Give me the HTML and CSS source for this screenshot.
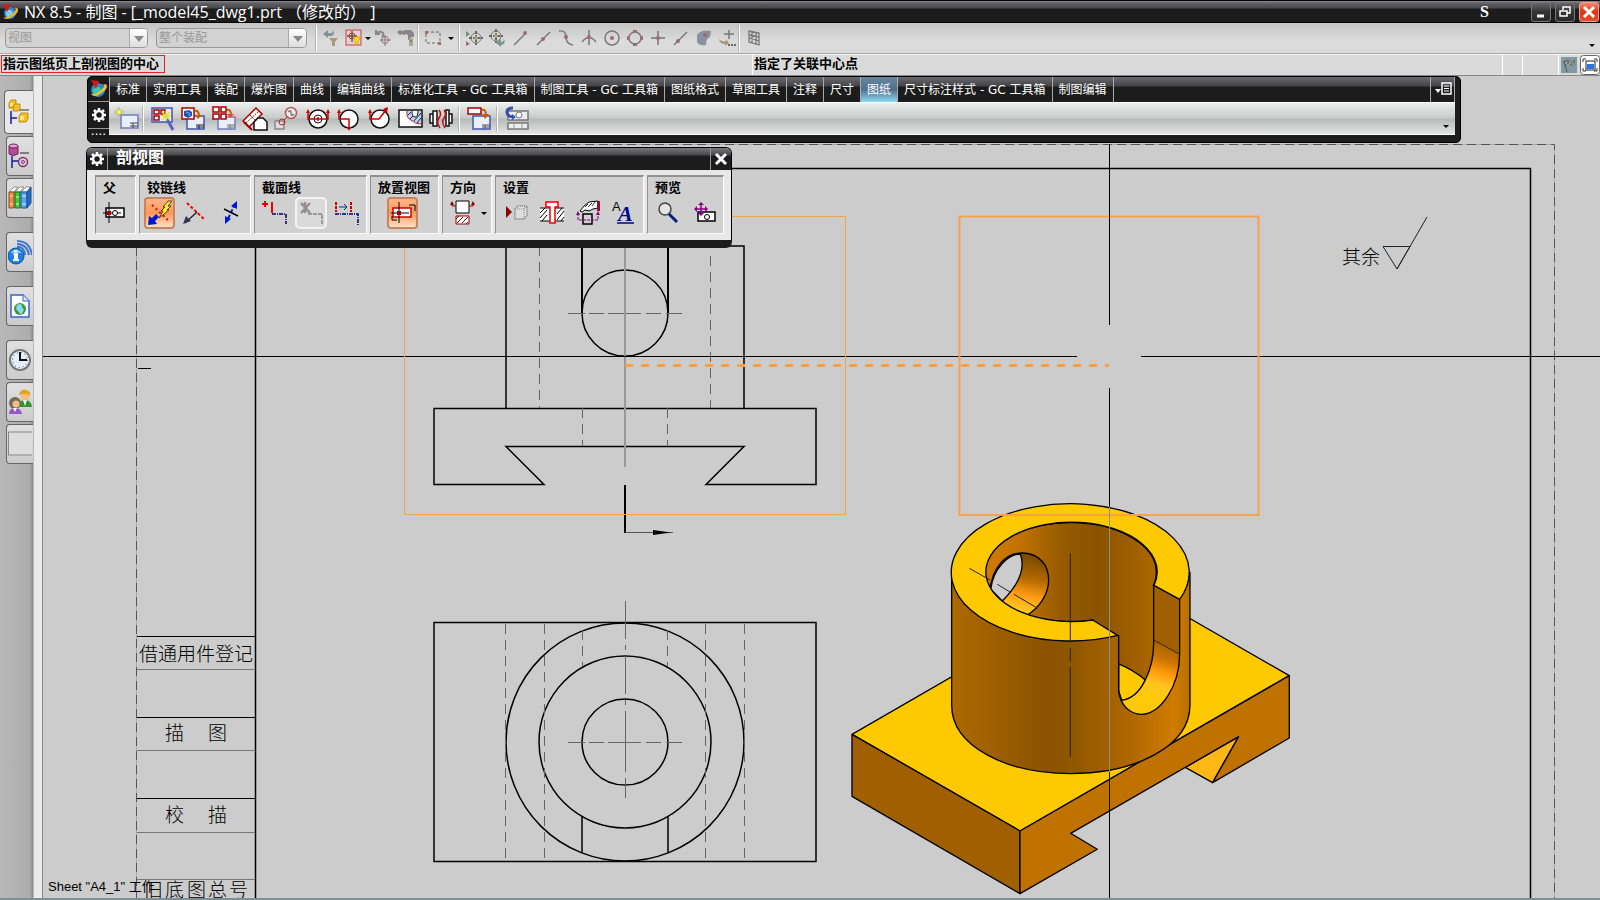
FILE: index.html
```html
<!DOCTYPE html>
<html lang="zh-CN">
<head>
  <meta charset="UTF-8">
  <meta name="viewport" content="width=device-width, initial-scale=1.0">
  <title>NX 8.5 - 制图</title>
  <link rel="stylesheet" href="styles.css">
</head>
<body>

  <header class="titlebar">
    <svg class="logo" width="18" height="18" viewBox="0 0 18 18">
      <circle cx="8" cy="10" r="6" fill="#2a86d0"/>
      <path d="M4 8q3-3 7 1l-3 6q-5-1-4-7z" fill="#7fd0f0"/>
      <path d="M1 14q2 4 9 0 7-4 6-8-1-2-4-1 3 1 1 3-3 4-8 6-3 1-4 0z" fill="#f4b030"/>
      <path d="M1 1l8 1-4 7z" fill="#d01818"/>
    </svg>
    <h1>NX 8.5 - 制图 - [_model45_dwg1.prt （修改的） ]</h1>
    <span class="ime">S</span>
    <div class="window-buttons">
      <button aria-label="最小化"><svg width="18" height="18"><path d="M5 13h7" stroke="#fff" stroke-width="3"/></svg></button>
      <button aria-label="还原"><svg width="18" height="18" fill="none" stroke="#fff" stroke-width="1.5"><path d="M7 7V4h7v6h-3"/><path d="M4 8h7v5H4z"/></svg></button>
      <button class="close" aria-label="关闭"><svg width="18" height="18"><path d="M4 4l10 10M14 4L4 14" stroke="#fff" stroke-width="3"/></svg></button>
    </div>
  </header>

  <div class="selection-bar">
    <div class="combo combo-type"><select aria-label="类型过滤器" disabled><option>视图</option></select></div>
    <div class="combo combo-scope"><select aria-label="选择范围" disabled><option>整个装配</option></select></div>
    <span class="sep"></span>
    <button aria-label="重置过滤器"><svg viewBox="0 0 18 18"><path d="M1 5l5-4v3h4q1-2 0-3 4 3 0 6H6v2z" fill="#7d9494"/><path d="M7 9h9l-3 4v4h-3v-4z" fill="#aa9a78"/></svg></button>
    <button aria-label="允许选择"><svg viewBox="0 0 18 18"><rect x="1" y="1" width="15" height="15" fill="#e4d0cc" stroke="#c8404c"/><path d="M7 2v11M2 7h10" stroke="#222"/><circle cx="7" cy="7" r="3" fill="none" stroke="#c03030"/><path d="M8 8h8l-3 4v4l-3-2v-2z" fill="#ffd61a" stroke="#c69000" stroke-width=".6"/></svg></button>
    <span class="drop drop-near"></span>
    <button aria-label="撤销选择"><svg viewBox="0 0 18 18" fill="none"><path d="M2 5q4-4 7-1 1 2-1 4M2 1v4h4" stroke="#85858a" stroke-width="2"/><circle cx="11" cy="11" r="3.500" stroke="#a06c6c"/><path d="M11 6v11M6 11h11" stroke="#8a7474"/></svg></button>
    <button aria-label="工具"><svg viewBox="0 0 18 18"><path d="M0 3l3-2 3 1 2-1h6l3 3v4h-3v3h-3V6L9 5 7 6 5 5 3 6z" fill="#85858a"/><path d="M12 9h4v8h-4z" fill="#b0a890"/><path d="M13 11h2v2h-2z" fill="#808084"/></svg></button>
    <span class="sep"></span>
    <button aria-label="矩形选择"><svg viewBox="0 0 18 18"><rect x="2" y="3" width="14" height="11" fill="none" stroke="#666" stroke-dasharray="3 2"/><path d="M1 2h3v3H1zM14 13h3v3h-3z" fill="#a06c6c"/></svg></button>
    <span class="drop drop-wide"></span>
    <span class="sep"></span>
    <button aria-label="移动"><svg viewBox="0 0 18 18"><path d="M1 2l4 3-4 3z" fill="#769078"/><path d="M1 12l4 3-4 2z" fill="#a06c6c"/><circle cx="11" cy="9" r="5" fill="none" stroke="#777"/><path d="M11 2v14M4 9h14" stroke="#666" stroke-width="2" stroke-dasharray="3 1"/><circle cx="11" cy="9" r="2" fill="#b3a37c"/></svg></button>
    <button aria-label="定向"><svg viewBox="0 0 18 18"><circle cx="8" cy="7" r="5" fill="none" stroke="#777"/><path d="M8 0v14M1 7h14" stroke="#666" stroke-width="2" stroke-dasharray="3 1"/><circle cx="8" cy="7" r="2" fill="#b3a37c"/><path d="M8 14l5-4v3q4 0 2-4 4 5-1 7h-1v2z" fill="#7d9494"/></svg></button>
    <button aria-label="端点"><svg viewBox="0 0 18 18"><path d="M3 16L14 5" stroke="#777" stroke-width="1.500"/><circle cx="14" cy="4" r="2" fill="#a06c6c"/></svg></button>
    <button aria-label="中点"><svg viewBox="0 0 18 18"><path d="M3 16L16 3" stroke="#777" stroke-width="1.500"/><circle cx="9" cy="10" r="2" fill="#a06c6c"/></svg></button>
    <button aria-label="控制点"><svg viewBox="0 0 18 18"><path d="M2 2q7-1 7 6t7 8" fill="none" stroke="#777" stroke-width="1.500"/><circle cx="9" cy="8" r="2" fill="#a06c6c"/></svg></button>
    <button aria-label="交点"><svg viewBox="0 0 18 18"><path d="M9 1v15M2 13q7-9 14 0" fill="none" stroke="#777" stroke-width="1.500"/><circle cx="9" cy="8" r="2" fill="#a06c6c"/></svg></button>
    <button aria-label="圆心"><svg viewBox="0 0 18 18"><circle cx="9" cy="9" r="7" fill="none" stroke="#777" stroke-width="1.500"/><circle cx="9" cy="9" r="2" fill="#a06c6c"/></svg></button>
    <button aria-label="象限点"><svg viewBox="0 0 18 18"><circle cx="9" cy="9" r="6" fill="none" stroke="#777" stroke-width="1.500"/><path d="M7 1h4v3H7zM7 14h4v3H7zM1 7h3v4H1zM14 7h3v4h-3z" fill="#a06c6c"/></svg></button>
    <button aria-label="现有点"><svg viewBox="0 0 18 18"><path d="M9 2v14M2 9h14" stroke="#777" stroke-width="1.500"/><circle cx="9" cy="9" r="2" fill="#a06c6c"/></svg></button>
    <button aria-label="曲线上的点"><svg viewBox="0 0 18 18"><path d="M2 16L15 3" stroke="#777" stroke-width="1.500"/><circle cx="6" cy="12" r="2" fill="#a06c6c"/></svg></button>
    <button aria-label="面上的点"><svg viewBox="0 0 18 18"><path d="M2 6q4-6 14-4l-1 6q-4 1-4 8-7 1-9-3z" fill="#8791a0"/><circle cx="10" cy="6" r="2" fill="#a06c6c"/></svg></button>
    <button aria-label="点构造器"><svg viewBox="0 0 18 18"><path d="M11 1v9M6 5h10" stroke="#777" stroke-width="1.500"/><path d="M1 9q1 4 7 3v-2l3 4-4 3v-2q-6 0-6-6z" fill="#a99878"/><path d="M10 16h2M13 16h2M16 16h2" stroke="#666" stroke-width="2"/></svg></button>
    <span class="sep"></span>
    <button aria-label="栅格"><svg viewBox="0 0 18 18"><path d="M4 2l10 2v12L4 13zM7 3v11M11 3v12M4 6l10 2M4 9l10 3" fill="none" stroke="#777" stroke-width="1.300"/></svg></button>
    <span class="drop overflow"></span>
  </div>

  <div class="prompt-bar">
    <div class="cue"><span>指示图纸页上剖视图的中心</span></div>
    <div class="status">指定了关联中心点</div>
    <div class="cell cell-small"></div>
    <div class="cell"></div>
    <div class="cell-icons">
      <svg width="16" height="16" viewBox="0 0 16 16"><path d="M0 0h16v16H0z" fill="#7d9aa5"/><path d="M2 4q5-3 7 0t5-2v6q-3 2-5 0t-5 1z" fill="#77726c"/><path d="M3 4l3 11" stroke="#555"/><path d="M4 5h2v2H4zM8 5h2v2H8zM6 7h2v2H6zM11 6h2v2h-2z" fill="#a0a098"/></svg>
      <svg width="20" height="20" viewBox="0 0 20 20"><rect x=".5" y=".5" width="19" height="19" rx="3" fill="#fff" stroke="#666"/><path d="M3 7V4h3M14 4h3v3M3 13v3h3M14 16h3v-3" fill="none" stroke="#333"/><rect x="6" y="6" width="9" height="9" fill="#fff" stroke="#222"/><path d="M7 9h7v5H7z" fill="#2679e0"/></svg>
    </div>
  </div>

  <main>
    <nav class="resource-bar">
      <button class="active" aria-label="装配导航器"><svg width="22" height="28" viewBox="0 0 22 28"><path d="M3 13v13M3 20h6" stroke="#1818a0" stroke-width="1.500"/><path d="M11 12h10" stroke="#333"/><g fill="#f7c02a" stroke="#b87800" stroke-width=".8"><path d="M1 5l2-3h5v6l-2 2H1z"/><path d="M5 9l2-3h5v6l-2 1H5z"/><path d="M11 18l2-3h7v6l-2 3h-7z"/></g><path d="M2 5h3v3H2zM12 18h4v4h-4z" fill="#ffe88a"/></svg></button>
      <button aria-label="约束导航器"><svg width="22" height="28" viewBox="0 0 22 28"><path d="M4 14v12M4 19h6" stroke="#1818a0" stroke-width="1.500"/><path d="M12 11h9" stroke="#222"/><path d="M1 4v8q4 3 9 0V4z" fill="#b44aa0" stroke="#70205e"/><ellipse cx="5.500" cy="4" rx="4.500" ry="2" fill="#e4a0d8" stroke="#70205e"/><circle cx="15" cy="20" r="4.500" fill="none" stroke="#8a2c74" stroke-width="1.500"/><circle cx="15" cy="20" r="1.500" fill="none" stroke="#8a2c74"/></svg></button>
      <button aria-label="重用库"><svg width="24" height="26" viewBox="0 0 24 26"><path d="M1 7l5-5h4L6 7zM7 7l5-5h4l-4 5zM13 7l5-5h5l-4 5z" fill="#fff" stroke="#777" stroke-width=".8"/><path d="M1 7h5v16H1z" fill="#f08a3c" stroke="#8c4a20"/><path d="M7 7h5v16H7z" fill="#3ccc38" stroke="#186a18"/><path d="M13 7h6v16h-6z" fill="#58a8f0" stroke="#1c4c90"/><path d="M19 7l4-5v16l-4 5z" fill="#1e6cc8" stroke="#1c4c90"/><path d="M2 11h3M8 12h3M14 11h4M2 19h3M8 19h3M14 19h4" stroke="#e8f4d8"/></svg></button>
      <button class="spaced" aria-label="HD3D 工具"><svg width="24" height="26" viewBox="0 0 24 26"><path d="M9 8q7-1 8 8M9 5q10 0 12 11M9 2q13 0 15 14" fill="none" stroke="#3c74d0" stroke-width="2"/><circle cx="8" cy="17" r="8" fill="#1b80e8" stroke="#1455a8"/><path d="M2 14q6-7 12 0" fill="#8cc6ff"/><path d="M6 14h4v6h1v2H5v-2h1v-4H5zM6 11h3v2H6z" fill="#fff"/></svg></button>
      <button class="spaced" aria-label="Web 浏览器"><svg width="22" height="26" viewBox="0 0 22 26"><path d="M3 2h12l6 6v16H3z" fill="#fff" stroke="#3266c8" stroke-width="1.500"/><path d="M15 2v6h6" fill="#d8e4ff" stroke="#3266c8"/><circle cx="12" cy="16" r="6" fill="#3d9a38"/><path d="M9 12q5-3 5 2l2 3-3 5-3-4-2-2z" fill="#8ed4f4"/></svg></button>
      <button class="spaced" aria-label="历史记录"><svg width="24" height="24" viewBox="0 0 24 24"><circle cx="12" cy="12" r="10" fill="#e4eefc" stroke="#777" stroke-width="2"/><circle cx="12" cy="12" r="7.500" fill="none" stroke="#445" stroke-dasharray="1 3"/><path d="M12 4v8h7" fill="none" stroke="#111" stroke-width="2"/></svg></button>
      <button aria-label="角色"><svg width="24" height="26" viewBox="0 0 24 26"><path d="M10 17q1-6 7-6t7 7H12z" fill="#2f9630"/><path d="M15 11h4l-2 6z" fill="#fff"/><circle cx="17" cy="7" r="4.500" fill="#f2bd80"/><path d="M11 6q1-6 7-5 5 1 4 6-3-3-7-2z" fill="#dfa51c"/><circle cx="7" cy="14" r="6" fill="#75695a"/><circle cx="8" cy="15" r="3.500" fill="#f2bd80"/><path d="M1 25q0-6 6-6t7 6z" fill="#9955cc"/><path d="M5 19h4l-2 4z" fill="#fff"/></svg></button>
      <button aria-label="空白"><svg width="24" height="26"><rect x=".5" y="1" width="26" height="23" fill="#ddd" stroke="#888"/></svg></button>
    </nav>

    <section class="canvas">
      <svg class="drawing" viewBox="43 76 1557 822" preserveAspectRatio="xMinYMin slice">
        <defs>
          <linearGradient id="outer"><stop offset="0" stop-color="#ae6900"/><stop offset=".4" stop-color="#8a5300"/><stop offset=".5" stop-color="#8f5600"/><stop offset=".75" stop-color="#ae6800"/><stop offset=".93" stop-color="#d07b00"/><stop offset="1" stop-color="#b87000"/></linearGradient>
          <linearGradient id="inner" gradientUnits="userSpaceOnUse" x1="435" y1="0" x2="949" y2="0"><stop offset="0" stop-color="#cf7b00"/><stop offset=".2" stop-color="#c27200"/><stop offset=".45" stop-color="#965a00"/><stop offset=".65" stop-color="#8a5300"/><stop offset="1" stop-color="#ad6700"/></linearGradient>
          <linearGradient id="hole" x1=".4" y1="0" x2=".2" y2="1"><stop offset="0" stop-color="#7c4a00"/><stop offset=".35" stop-color="#b46a00"/><stop offset=".62" stop-color="#ff9c14"/><stop offset=".85" stop-color="#ffc81e"/></linearGradient>
          <linearGradient id="slot" gradientUnits="userSpaceOnUse" x1="985" y1="500" x2="940" y2="650"><stop offset="0" stop-color="#ad6600"/><stop offset=".25" stop-color="#c87300"/><stop offset=".5" stop-color="#ff970c"/><stop offset=".75" stop-color="#ffc51e"/><stop offset="1" stop-color="#ffc90a"/></linearGradient>
        </defs>

        <!-- sheet border and title column -->
        <path d="M136.500 900V144.500H1554.500V900" fill="none" stroke="#aaa"/>
        <path d="M136.500 900V144.500H1554.500V900" fill="none" stroke="#555" stroke-dasharray="9 5"/>
        <path d="M255.500 900V168.500H1530.500V900" fill="none" stroke="#000" stroke-width="1.500"/>
        <path d="M137 636.500H255M137 717.500H255M137 798.500H255M138 368.500H151" stroke="#000"/>
        <path d="M137 669.500H255M137 750.500H255M137 832.500H255M137 879.500H255" stroke="#777"/>
        <g class="cad-text">
          <text x="139" y="661">借通用件登记</text>
          <text x="165" y="740">描</text><text x="208" y="740">图</text>
          <text x="165" y="822">校</text><text x="208" y="822">描</text>
          <text x="144 165 187 208 229" y="897">旧底图总号</text>
          <text x="1342" y="264">其余</text>
        </g>
        <path d="M1383 246.500H1410L1397 269L1383 246.500M1397 269L1427 217" fill="none" stroke="#222"/>
        <text class="sheet-name" x="48" y="891">Sheet "A4_1" 工作</text>

        <!-- front view -->
        <g fill="none" stroke="#000" stroke-width="1.500">
          <path d="M506 408.500V246H744V408.500M434 408.500H816V484.500H706L744 446.500H506L544 484.500H434z"/>
          <path d="M582 246V313M668 246V313" stroke-width="2"/>
          <circle cx="625" cy="313" r="43"/>
        </g>
        <g stroke="#666" stroke-dasharray="10 6" fill="none">
          <path d="M539.500 246V408M710.500 256V408M582.500 408V446M667.500 408V446"/>
        </g>
        <path d="M568 313.500H585M589 313.500H604M608 313.500H641M646 313.500H661M666 313.500H682" stroke="#666"/>
        <path d="M625 246V467" stroke="#999" stroke-width="2"/>
        <path d="M625 485V533" stroke="#000" stroke-width="2"/>
        <path d="M625 532.500H673" stroke="#555"/>
        <path d="M653 530L671 532.500L653 535z"/>

        <!-- top view -->
        <g fill="none" stroke="#000" stroke-width="1.500">
          <path d="M434 622.500H816V861.500H434z"/>
          <circle cx="625" cy="742" r="119"/>
          <circle cx="625" cy="742" r="86"/>
          <circle cx="625" cy="742" r="43"/>
          <path d="M582 816V853M668 816V853"/>
        </g>
        <path d="M505.500 624V861M544.500 624V861M705.500 624V861M744.500 624V861M582.500 630V666M667.500 630V666" stroke="#666" stroke-dasharray="10 6"/>
        <path d="M568 742.500H585M589 742.500H604M608 742.500H641M646 742.500H661M666 742.500H682M625.500 601V639M625.500 645V650M625.500 656V694M625.500 700V705M625.500 711V772M625.500 778V798" stroke="#666"/>

        <path d="M43 356.500H1077M1141 356.500H1600" stroke="#000"/>

        <!-- isometric view -->
        <g class="solid" transform="translate(840 480) scale(.3333)" fill="none" stroke="#000" stroke-width="4" stroke-linejoin="round">
          <path fill="#ffc900" d="M36 763L844 297L1348 587L540 1053z"/>
          <path fill="#a05f00" d="M36 763L540 1053V1241L36 949z"/>
          <path fill="#ffb617" d="M1036 862L1196 770L1118 908z"/>
          <path fill="#bf7200" d="M540 1053L1348 587V774L1118 908L1196 770L692 1060L772 1108L540 1241z"/>
          <path fill="url(#outer)" d="M335 277V675C335 800 500 881 692 881S1050 800 1050 675V277z"/>
          <ellipse fill="url(#inner)" cx="692" cy="277" rx="257" ry="149"/>
          <path fill="url(#hole)" d="M450 335C455 260 500 219 545 219C600 219 626 258 626 300C626 345 595 385 562 405L500 400z"/>
          <path fill="#ccc" d="M452 328C460 265 505 222 541 222C557 265 540 310 487 363z"/>
          <path fill="url(#inner)" stroke="none" d="M758 420L836 466V552Q880 570 916 600Q941 550 941 490V316L880 350z"/>
          <path fill="#ffc900" d="M836 552Q880 570 916 600Q890 655 845 661L836 632z"/>
          <path fill="#a05f00" d="M941 316L1019 358V523L941 480z" stroke="none"/>
          <path fill="url(#slot)" d="M941 480L1019 523C1019 620 960 703 905 703Q865 703 845 661Q890 655 916 600Q941 550 941 480z" stroke="none"/>
          <path d="M836 466V632C840 675 870 703 905 703C960 703 1019 620 1019 523V358M941 316V490Q941 550 916 600Q890 655 845 661"/>
          <path d="M941 480L1019 523" stroke-width="2"/>
          <path fill="#ffc900" d="M1019 358A357 206 0 1 0 833 466L758 420A257 149 0 1 1 942 316z"/>
          <path stroke-width="3" stroke="#222" d="M691 220V488M691 505V545M691 560V830M388 265L450 300M472 313L510 336M522 343L593 385"/>
        </g>

        <!-- view bounds, hinge line and crosshair -->
        <g fill="none" stroke="#f9a14a">
          <path d="M404.500 216.500H845.500V514.500H404.500z"/>
          <path d="M959.500 216.500H1258.500V515H959.500z" stroke-width="2"/>
          <path d="M625 365.500H1109" stroke-width="3" stroke-dasharray="8 8"/>
        </g>
        <path d="M1109.500 144V325M1109.500 388V898" stroke="#000"/>
        <path d="M1109.500 507V772" stroke="#8a8f90"/>
      </svg>

      <div class="toolbar">
        <div class="grip">
          <svg width="20" height="24" viewBox="0 0 20 24"><circle cx="9" cy="13" r="7" fill="#2a86d0"/><path d="M4 12q4-5 8 0l-3 7q-6-1-5-7z" fill="#40c8a0"/><path d="M2 17q3 4 9 0 7-4 7-8 0-3-5-1 3 0 2 2-3 4-9 7z" fill="#f4c030"/><path d="M2 3l8 1-3 8z" fill="#d01818"/></svg>
          <button aria-label="工具条选项"><svg class="gear" width="16" height="16" viewBox="0 0 16 16"><circle cx="8" cy="8" r="4" fill="none" stroke="#fff" stroke-width="2.500"/><path d="M8 1v2M8 13v2M1 8h2M13 8h2M3 3l1.500 1.500M11.500 11.500L13 13M13 3l-1.500 1.500M4.500 11.500L3 13" stroke="#fff" stroke-width="2.500"/></svg></button>
          <span class="dots">····</span>
        </div>
        <div class="toolbar-body">
          <div class="tabs">
            <button>标准</button><button>实用工具</button><button>装配</button><button>爆炸图</button><button>曲线</button><button>编辑曲线</button><button>标准化工具 - GC 工具箱</button><button>制图工具 - GC 工具箱</button><button>图纸格式</button><button>草图工具</button><button>注释</button><button>尺寸</button><button class="selected">图纸</button><button>尺寸标注样式 - GC 工具箱</button><button>制图编辑</button>
            <button class="tab-menu" aria-label="工具条列表"><svg width="18" height="14" viewBox="0 0 18 14"><path d="M1 7h6l-3 4z" fill="#fff"/><path d="M8 1h9v11H8z" fill="none" stroke="#fff" stroke-width="1.500"/><path d="M10 4h5M10 6.500h5M10 9h5" stroke="#fff"/></svg></button>
          </div>
          <div class="tools">
            <button aria-label="新建图纸页"><svg viewBox="0 0 26 26"><path d="M7 9h17v13H7z" fill="#e8eefa" stroke="#6d7fc4" stroke-width="1.500"/><path d="M16 17h8M19 17v5M16 20h8" stroke="#444"/><path d="M5 1v10M0 6h10M2 3l6 6M8 3L2 9" stroke="#a5b04a"/><circle cx="5" cy="6" r="2" fill="#ff4"/></svg></button>
            <span class="sep"></span>
            <button aria-label="视图创建向导"><svg viewBox="0 0 26 26"><path d="M3 2h20v14H3z" fill="#e8eefa" stroke="#4257ae" stroke-width="1.500"/><path d="M5 4h5v4H5zM12 4h4v4h-4zM5 10h5v4H5z" fill="#fff" stroke="#a00" stroke-width="1.500"/><path d="M18 13l6 11" stroke="#5566c8" stroke-width="3"/><path d="M17 5v10M12 10h10M13 6l8 8M21 6l-8 8" stroke="#e2df3c" stroke-width="1.500"/></svg></button>
            <button aria-label="基本视图"><svg viewBox="0 0 26 26"><path d="M7 10h17v13H7z" fill="#e8eefa" stroke="#4257ae" stroke-width="1.500"/><path d="M16 19h8M19 19v4M16 21h8" stroke="#222"/><path d="M2 2h12v11H2z" fill="#fff" stroke="#a00" stroke-width="1.500"/><path d="M4 5l5-1 3 2v4l-4 2-4-2z" fill="#2455b4"/><path d="M6 6l3 1 1 3" stroke="#7ab0ee" fill="none"/><path d="M15 5q4-1 4 5" stroke="#c55c08" stroke-width="2" fill="none"/><path d="M15 9h7l-4 4z" fill="#c55c08"/></svg></button>
            <button aria-label="标准视图"><svg viewBox="0 0 26 26"><path d="M7 11h17v12H7z" fill="#e8eefa" stroke="#6d7fc4" stroke-width="1.500"/><path d="M16 19h8M19 19v4M16 21h8" stroke="#777"/><path d="M2 1h6v5H2zM10 1h5v5h-5zM2 8h6v5H2zM10 8h5v5h-5z" fill="#fff" stroke="#a00" stroke-width="1.500"/><path d="M16 4q4-1 4 5" stroke="#c55c08" stroke-width="2" fill="none"/><path d="M16 8h7l-4 4z" fill="#c55c08"/></svg></button>
            <button aria-label="投影视图"><svg viewBox="0 0 26 26"><path d="M1 15L14 2l6 6L7 21z" fill="#fff" stroke="#a00" stroke-width="1.500"/><path d="M4 17L17 5M8 9l5 5" stroke="#a00" stroke-dasharray="2 1"/><path d="M2 16l8 8" stroke="#a00" stroke-width="2"/><path d="M12 16l4-4h5l4 4v8H12z" fill="#fff" stroke="#111" stroke-width="1.500"/></svg></button>
            <button aria-label="局部放大图"><svg viewBox="0 0 26 26"><path d="M2 15h9v8H2z" fill="#ddd" stroke="#888" stroke-width="1.500"/><circle cx="9" cy="16" r="3" fill="none" stroke="#b22"/><path d="M11 14l4-4" stroke="#b22"/><circle cx="18" cy="7" r="5.500" fill="#eee" stroke="#b55" stroke-width="1.500"/><path d="M15 6q3-3 3 1t3 1" fill="none" stroke="#777" stroke-width="1.500"/></svg></button>
            <button aria-label="剖视图"><svg viewBox="0 0 26 26"><circle cx="14" cy="13" r="9" fill="#fff" stroke="#111" stroke-width="1.500"/><circle cx="14" cy="13" r="4" fill="none" stroke="#111"/><path d="M4 6v7h20V6M14 11v4" fill="none" stroke="#c00" stroke-width="1.500"/><path d="M4 3l2 4H2zM24 3l2 4h-4z" fill="#c00"/></svg></button>
            <button aria-label="半剖视图"><svg viewBox="0 0 26 26"><circle cx="14" cy="13" r="9" fill="#fff" stroke="#111" stroke-width="1.500"/><path d="M4 6v7h10v9" fill="none" stroke="#c00" stroke-width="1.500"/><path d="M4 3l2 4H2zM14 25l2-4h-4z" fill="#c00"/></svg></button>
            <button aria-label="旋转剖视图"><svg viewBox="0 0 26 26"><circle cx="14" cy="13" r="9" fill="#fff" stroke="#111" stroke-width="1.500"/><path d="M4 6v7h9l7-9" fill="none" stroke="#c00" stroke-width="1.500"/><path d="M4 3l2 4H2zM22 1l-1 6-4-4z" fill="#c00"/></svg></button>
            <button aria-label="局部剖视图"><svg viewBox="0 0 26 26"><path d="M2 4h23v17H2z" fill="#fff" stroke="#111" stroke-width="1.500"/><path d="M10 5q-1 7 4 9 4 3 7 3h3V5h-3q0 6-3 6t-3-6z" fill="#bcd0f0"/><path d="M10 5q-1 7 4 9 4 4 10 4" fill="none" stroke="#a22"/><path d="M11 9l3-3M13 13l3-3M17 15l7-8M20 17l4-5" stroke="#225"/><path d="M15 5q0 6 3 6t3-6" fill="none" stroke="#111"/></svg></button>
            <button aria-label="断开视图"><svg viewBox="0 0 26 26"><path d="M2 8h3v9H2zM5 5h4v15H5zM18 4h3v16h-3zM21 8h3v9h-3z" fill="#fff" stroke="#111" stroke-width="1.500"/><path d="M11 4q3 4 0 8t1 10M16 4q3 4 0 8t1 10" fill="none" stroke="#b11" stroke-width="1.500"/></svg></button>
            <span class="sep sep-wide"></span>
            <button aria-label="视图标签"><svg viewBox="0 0 26 26"><path d="M7 10h17v13H7z" fill="#e8eefa" stroke="#4257ae" stroke-width="1.500"/><path d="M16 19h8M19 19v4M16 21h8" stroke="#555"/><path d="M2 2h13v6H2z" fill="#fff" stroke="#a00" stroke-width="1.500"/><path d="M16 4q4-1 4 5" stroke="#c55c08" stroke-width="2" fill="none"/><path d="M16 8h7l-4 5z" fill="#c55c08"/></svg></button>
            <span class="sep sep-wide"></span>
            <button aria-label="更新视图"><svg viewBox="0 0 26 26"><path d="M4 5h20v9H4zM4 17h20v6H4z" fill="#eee" stroke="#777" stroke-width="1.500"/><circle cx="15" cy="9" r="3" fill="#fff" stroke="#777"/><path d="M10 17v6M18 17v6" stroke="#999"/><path d="M8 11q-5-1-5-5t6-4" fill="none" stroke="#3450b0" stroke-width="3"/><path d="M8 8v6l4-3z" fill="#3450b0"/></svg></button>
            <span class="drop overflow"></span>
          </div>
        </div>
      </div>

      <div class="dialog-bar">
        <div class="dialog-title">
          <button aria-label="对话框选项"><svg class="gear" width="16" height="16" viewBox="0 0 16 16"><circle cx="8" cy="8" r="4" fill="none" stroke="#fff" stroke-width="2.500"/><path d="M8 1v2M8 13v2M1 8h2M13 8h2M3 3l1.500 1.500M11.500 11.500L13 13M13 3l-1.500 1.500M4.500 11.500L3 13" stroke="#fff" stroke-width="2.500"/></svg></button>
          <h2>剖视图</h2>
          <button class="dialog-close" aria-label="关闭"><svg width="14" height="14"><path d="M2 2l10 10M12 2L2 12" stroke="#fff" stroke-width="3"/></svg></button>
        </div>
        <div class="groups">
          <div class="group">
            <h3>父</h3>
            <div class="group-tools">
              <button aria-label="基本视图"><svg viewBox="5 0 28 28"><path d="M9 9h18v9H9z" fill="#fff" stroke="#000" stroke-width="1.500"/><path d="M12 3v21M6 14h18" stroke="#000"/><path d="M10 12h4v4h-4z" fill="#a00"/><circle cx="18" cy="14" r="2.500" fill="#fff" stroke="#000"/></svg></button>
            </div>
          </div>
          <div class="group">
            <h3>铰链线</h3>
            <div class="group-tools">
              <button class="pressed" aria-label="自动判断铰链线"><svg viewBox="0 0 28 28"><path d="M6 6l18 17" stroke="#e00" stroke-width="2" stroke-dasharray="2 3"/><path d="M22 2h4l-4 5h3l-4 4h2L13 19l4-7h-2l4-4h-2z" fill="#ffe838" stroke="#222" stroke-width=".8"/><path d="M2 26l1-9 3 2 4-4 3 3-4 4 2 3z" fill="#0018d0"/></svg></button>
              <button aria-label="定义铰链线"><svg viewBox="0 0 28 28"><path d="M6 4l18 17" stroke="#e00" stroke-width="2" stroke-dasharray="3 2"/><path d="M16 13L4 24" stroke="#224" stroke-width="1.500"/><path d="M2 25l3-8 5 5z" fill="#335"/></svg></button>
              <button aria-label="反向"><svg viewBox="0 0 28 28"><path d="M18 5L10 22" stroke="#0018d0" stroke-width="2" stroke-dasharray="4 2"/><path d="M20 2v8l-6-3zM8 25v-8l6 3z" fill="#0018d0"/><path d="M7 10l14 7" stroke="#000" stroke-width="1.500"/></svg></button>
            </div>
          </div>
          <div class="group">
            <h3>截面线</h3>
            <div class="group-tools">
              <button aria-label="添加段"><svg viewBox="0 0 28 28"><path d="M1 5h6M4 2v6M11 3v11" stroke="#e00" stroke-width="2"/><path d="M11 15h14v10" fill="none" stroke="#006" stroke-width="1.500" stroke-dasharray="4 1 1 1"/></svg></button>
              <button class="disabled-tool" aria-label="删除段" disabled><svg viewBox="0 0 28 28"><path d="M8 3v11M4 4l9 10M13 4L4 14" stroke="#978c8e" stroke-width="2.500"/><path d="M11 15h14v11" fill="none" stroke="#999" stroke-width="2" stroke-dasharray="4 1"/></svg></button>
              <button aria-label="移动段"><svg viewBox="0 0 28 28"><path d="M3 3v10M18 3v10" stroke="#c00" stroke-width="2" stroke-dasharray="3 1"/><path d="M6 8h7M11 5l3 3-3 3" fill="none" stroke="#0030a0"/><path d="M2 15h23v11" fill="none" stroke="#006" stroke-width="1.500" stroke-dasharray="4 1 1 1"/></svg></button>
            </div>
          </div>
          <div class="group place">
            <h3>放置视图</h3>
            <div class="group-tools">
              <button class="pressed" aria-label="放置视图"><svg viewBox="0 0 28 28"><path d="M4 9h18v9H4z" fill="#fff" stroke="#c00" stroke-width="1.500"/><path d="M10 3v21M2 14h18" stroke="#000"/><path d="M8 12h4v4H8z" fill="#a00"/><path d="M20 6h6v6M3 17v4h5" fill="none" stroke="#000"/></svg></button>
            </div>
          </div>
          <div class="group direction">
            <h3>方向</h3>
            <div class="group-tools">
              <button aria-label="剖视图方向"><svg viewBox="0 0 28 28"><path d="M7 2h13v12H7z" fill="#fff" stroke="#000"/><path d="M3 7h4M20 7h4M3 7V3M24 7V3" fill="none" stroke="#900"/><path d="M3 2l2 4H1zM24 2l2 4h-4z" fill="#900"/><path d="M7 17h13v8H7z" fill="#fff" stroke="#900"/><path d="M8 24l6-6M13 24l6-6M7 20l3-3M17 25l2-2" stroke="#900"/></svg></button>
              <span class="drop"></span>
            </div>
          </div>
          <div class="group">
            <h3>设置</h3>
            <div class="group-tools">
              <button aria-label="隐藏组件"><svg viewBox="0 0 28 28"><path d="M4 7l6 6-6 6z" fill="#800"/><path d="M13 10l3-3h9v10l-3 3h-9z" fill="#ddd" stroke="#777" stroke-width="1.500" stroke-dasharray="1 1"/><path d="M13 10h9v10M22 10l3-3" fill="none" stroke="#888" stroke-dasharray="1 1"/></svg></button>
              <button aria-label="非剖切组件"><svg viewBox="0 0 28 28"><path d="M2 9h24v13H2z" fill="#fff"/><path d="M2 9h24M2 22h24" stroke="#000"/><path d="M2 14l5-5M2 19l7-8M4 22l5-6M19 15l5-6M19 21l7-9M23 22l3-4" stroke="#000"/><path d="M8 3h12v5h-3v16h-5V8H8z" fill="#fff" stroke="#e00" stroke-width="1.500"/></svg></button>
              <button aria-label="剖切线样式"><svg viewBox="0 0 28 28"><path d="M6 12l4-5 5-4 9-1v7l-5 1-4 2-4-1-3 2z" fill="#fff" stroke="#000"/><path d="M11 8l3-3M14 8l4-4M18 7l3-4" stroke="#000" stroke-width=".8"/><path d="M23 2h3v10h-3z" fill="#901038"/><path d="M9 15h9v10H9z" fill="none" stroke="#000" stroke-width="1.500"/><path d="M4 14v7h20v-7" fill="none" stroke="#808" stroke-dasharray="3 1"/><path d="M4 12l2 4H2zM24 12l2 4h-4z" fill="#808"/></svg></button>
              <button aria-label="样式"><svg viewBox="0 0 28 28"><text class="small-a" x="2" y="12">A</text><text class="big-a" x="8" y="22">A</text><path d="M7 24h17" stroke="#008" stroke-width="1.500"/></svg></button>
            </div>
          </div>
          <div class="group">
            <h3>预览</h3>
            <div class="group-tools">
              <button aria-label="预览"><svg viewBox="0 0 28 28"><circle cx="11" cy="10" r="6" fill="#e4e4e4" stroke="#444" stroke-width="1.500"/><path d="M15 15l8 8" stroke="#002080" stroke-width="3"/></svg></button>
              <button aria-label="移动视图"><svg viewBox="0 0 28 28"><path d="M8 13h17v9H8z" fill="#fff" stroke="#000" stroke-width="1.500"/><circle cx="17" cy="18" r="2.500" fill="none" stroke="#000"/><path d="M11 5v10M6 10h10" stroke="#808" stroke-width="1.500"/><path d="M11 3l3 3H8zM11 17l3-3H8zM4 10l3-3v6zM18 10l-3-3v6z" fill="#808"/></svg></button>
            </div>
          </div>
        </div>
      </div>
    </section>
  </main>
  <footer class="taskbar-edge"></footer>

</body>
</html>
```

FILE: styles.css
```css
* {
  box-sizing: border-box;
}
body {
  margin: 0;
  height: 100vh;
  display: flex;
  flex-direction: column;
  overflow: hidden;
  background: #ccc;
  color: #000;
  font-family: "DejaVu Sans", "Noto Sans CJK SC", sans-serif;
  font-size: 12px;
}
h1, h2, h3 {
  margin: 0;
}
button {
  display: flex;
  align-items: center;
  justify-content: center;
  padding: 0;
  border: none;
  background: none;
  color: inherit;
  font: inherit;
}
svg {
  display: block;
  flex-shrink: 0;
}

/* title bar */
.titlebar {
  flex: none;
  display: flex;
  align-items: center;
  height: 23px;
  padding: 0 1px 0 2px;
  border-top: 1px solid #000;
  border-bottom: 1px solid #000;
  background: linear-gradient(#8c8c92 0, #606066 2px, #48484c 7px, #1c1c1c 8px, #1c1c1c 100%);
  color: #fff;
}
.titlebar h1 {
  flex: 1;
  margin-left: 4px;
  font-family: "Open Sans", "Noto Sans CJK SC", sans-serif;
  font-size: 16px;
  font-weight: 400;
  line-height: 20px;
  white-space: nowrap;
}
.ime {
  margin-right: 42px;
  font-family: "Liberation Serif", serif;
  font-size: 16px;
  font-weight: 700;
}
.window-buttons {
  display: flex;
  gap: 4px;
}
.window-buttons button {
  width: 20px;
  height: 20px;
  border: 1px solid #777;
  border-radius: 3px;
  background: linear-gradient(#666, #333 50%, #2a2a2a);
}
.window-buttons .close {
  border-color: #f0a090;
  background: linear-gradient(#f08870, #dc3414 50%, #e84c28);
}

/* selection bar */
.selection-bar {
  flex: none;
  display: flex;
  align-items: center;
  height: 31px;
  padding-left: 5px;
  border-bottom: 1px solid #aaa;
  background: linear-gradient(#c4c4c4, #dcdcdc 60%, #dadada);
}
.combo {
  position: relative;
  height: 20px;
  margin-right: 8px;
}
.combo-type {
  width: 143px;
}
.combo-scope {
  width: 151px;
}
.combo select {
  width: 100%;
  height: 20px;
  padding: 0 2px;
  appearance: none;
  border: 1px solid #999;
  border-radius: 4px;
  background: #d2d2d2;
  color: #999;
  opacity: 1;
  font: inherit;
}
.combo::after {
  content: "";
  position: absolute;
  top: 1px;
  right: 1px;
  width: 17px;
  height: 18px;
  border-left: 1px solid #aaa;
  border-radius: 0 3px 3px 0;
  background: linear-gradient(#fff, #ddd);
}
.combo::before {
  content: "";
  position: absolute;
  z-index: 1;
  top: 8px;
  right: 4px;
  border: 5px solid transparent;
  border-top: 6px solid #888;
  border-bottom: none;
}
.sep {
  width: 2px;
  height: 26px;
  margin-right: 2px;
  border-left: 1px solid #b4b4b4;
  border-right: 1px solid #fff;
}
.selection-bar button {
  width: 23px;
  height: 22px;
}
.selection-bar button svg {
  width: 18px;
  height: 18px;
}
.drop {
  display: flex;
  justify-content: center;
  width: 8px;
}
.drop::after {
  content: "";
  border: 3px solid transparent;
  border-top: 3px solid #000;
  border-bottom: none;
}
.selection-bar .drop-near {
  width: 6px;
  justify-content: flex-end;
}
.selection-bar .drop-wide {
  width: 14px;
}
.selection-bar .overflow {
  align-self: flex-end;
  margin: 0 4px 6px auto;
}

/* prompt bar */
.prompt-bar {
  flex: none;
  display: flex;
  height: 22px;
  border-top: 1px solid #f4f4f4;
  border-bottom: 1px solid #888;
  background: #dadada;
  font-size: 13px;
  font-weight: 700;
  line-height: 18px;
}
.cue {
  flex: 0 0 47%;
  display: flex;
  align-items: flex-start;
  padding-left: 1px;
}
.cue span {
  height: 18px;
  padding: 0 5px 0 1px;
  border: 1px solid #e82020;
  line-height: 16px;
}
.status {
  flex: 1;
  padding-left: 1px;
  border-left: 1px solid #fff;
}
.cell {
  width: 36px;
  border-left: 1px solid #fff;
}
.cell-small {
  width: 20px;
}
.cell-icons {
  display: flex;
  align-items: center;
  gap: 3px;
  width: 42px;
  padding-left: 2px;
  border-left: 1px solid #fff;
}

/* resource bar */
main {
  flex: 1;
  display: flex;
  min-height: 0;
}
.resource-bar {
  flex: none;
  display: flex;
  flex-direction: column;
  align-items: flex-end;
  gap: 2px;
  width: 43px;
  padding: 14px 9px 0 0;
  border-right: 1px solid #888;
  background: linear-gradient(90deg, #b8b8b8, #adadad 30px, #888 33px, #ebebeb 34px, #ebebeb);
}
.resource-bar button {
  justify-content: flex-start;
  width: 27px;
  height: 40px;
  padding-left: 1px;
  overflow: hidden;
  border: 1px solid #666;
  border-right: none;
  border-radius: 4px 0 0 4px;
  background: linear-gradient(#e0e0e0, #ccc);
}
.resource-bar .active {
  width: 29px;
  height: 44px;
  padding-left: 3px;
  background: #e8e8e8;
}
.resource-bar .spaced {
  margin-top: 12px;
}

/* graphics window */
.canvas {
  position: relative;
  flex: 1;
  min-width: 0;
  overflow: hidden;
}
.drawing {
  width: 100%;
  height: 100%;
}
.cad-text {
  font-family: "Noto Sans CJK SC", sans-serif;
  font-size: 19px;
  font-weight: 300;
}
.sheet-name {
  font-family: "Liberation Sans", "Noto Sans CJK SC", sans-serif;
  font-size: 13px;
}

/* floating toolbar */
.toolbar {
  position: absolute;
  top: 0;
  left: 44px;
  right: 139px;
  display: flex;
  height: 67px;
  padding-right: 5px;
  border: 1px solid #000;
  border-radius: 5px;
  background: #1c1c1c;
  color: #fff;
}
.grip {
  flex: none;
  display: flex;
  flex-direction: column;
  align-items: center;
  width: 21px;
}
.grip button {
  width: 21px;
  height: 28px;
  border-top: 1px solid #999;
  border-bottom: 1px solid #999;
}
.dots {
  line-height: 12px;
}
.toolbar-body {
  flex: 1;
  min-width: 0;
}
.tabs {
  display: flex;
  height: 25px;
  background: linear-gradient(#6a6a6e, #444448 9px, #1c1c1c 10px);
}
.tabs button {
  flex: none;
  padding: 0 6px 2px;
  border-left: 1px solid #aaa;
  white-space: nowrap;
}
.tabs button:nth-last-child(2) {
  border-right: 1px solid #aaa;
}
.tabs .selected {
  background: linear-gradient(#6886a0, #50708c 50%, #8cd8f4);
}
.tabs .tab-menu {
  width: 25px;
  margin-left: auto;
  padding: 0 3px 2px;
  border-right: 1px solid #aaa;
}
.tools {
  display: flex;
  align-items: center;
  height: 33px;
  padding-left: 2px;
  border-top: 1px solid #fff;
  border-bottom: 1px solid #fff;
  background: linear-gradient(#eceeee, #c8caca 48%, #b8baba 52%, #e4e4e4);
}
.tools button {
  width: 31px;
  height: 31px;
}
.tools svg {
  width: 26px;
  height: 26px;
}
.tools .sep-wide {
  margin: 0 3px 0 2px;
}
.tools .overflow {
  align-self: flex-end;
  margin: 0 5px 6px auto;
}

/* section view dialog bar */
.dialog-bar {
  position: absolute;
  top: 71px;
  left: 43px;
  border: 1px solid #000;
  border-bottom: 8px solid #1c1c1c;
  border-radius: 6px;
  background: #e8e8e8;
}
.dialog-title {
  display: flex;
  height: 22px;
  border-radius: 5px 5px 0 0;
  background: linear-gradient(#77777b, #48484c 7px, #1c1c1c 8px);
  color: #fff;
}
.dialog-title button {
  width: 21px;
  border-right: 1px solid #999;
}
.dialog-title h2 {
  flex: 1;
  margin-left: 8px;
  font-size: 16px;
  line-height: 19px;
}
.dialog-title .dialog-close {
  border-left: 1px solid #999;
  border-right: none;
}
.groups {
  display: flex;
  gap: 3px;
  padding: 5px 7px 6px 8px;
}
.group {
  width: min-content;
  height: 59px;
  padding: 2px 3px 0 4px;
  border: 1px solid #fff;
  border-top: 2px solid #909090;
  border-left: 1px solid #909090;
  background: #d0d0d0;
}
.group h3 {
  padding-left: 3px;
  font-size: 13px;
  line-height: 17px;
  white-space: nowrap;
}
.group-tools {
  display: flex;
  align-items: center;
  gap: 4px;
  margin-top: 1px;
}
.group-tools button {
  flex: none;
  width: 32px;
  height: 32px;
}
.group-tools svg {
  width: 28px;
  height: 28px;
}
.group-tools .pressed {
  width: 31px;
  border: 2px solid #c8845c;
  border-radius: 4px;
  background: linear-gradient(#ffb488, #ff9858 50%, #ffe0c4);
}
.group-tools .disabled-tool {
  border: 2px solid #f4f4f4;
  border-radius: 5px;
  background: #dadada;
}
.place {
  padding-right: 8px;
}
.place .group-tools {
  justify-content: center;
}
.direction .group-tools {
  gap: 1px;
}
.small-a {
  font-family: "Liberation Sans", sans-serif;
  font-size: 13px;
}
.big-a {
  font-family: "Liberation Serif", serif;
  font-size: 22px;
  font-style: italic;
  font-weight: 700;
  fill: #00088c;
}

.taskbar-edge {
  flex: none;
  height: 2px;
  background: #7d8f96;
}
```
